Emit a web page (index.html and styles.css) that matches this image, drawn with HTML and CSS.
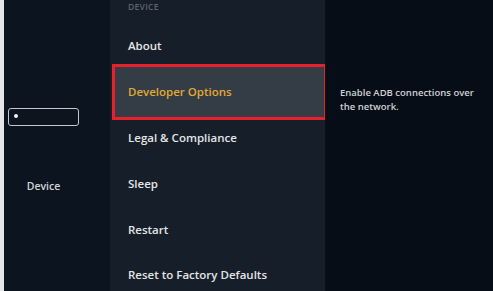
FILE: index.html
```html
<!DOCTYPE html>
<html>
<head>
<meta charset="utf-8">
<link rel="stylesheet" href="styles.css">
</head>
<body>
<div class="screen">
  <div class="side">
    <div class="side-col">
      <div class="dev-icon"><span class="dot"></span></div>
      <div class="side-label">Device</div>
    </div>
  </div>
  <div class="menu">
    <div class="menu-head">DEVICE</div>
    <div class="item">About</div>
    <div class="item selected">Developer Options</div>
    <div class="item">Legal &amp; Compliance</div>
    <div class="item">Sleep</div>
    <div class="item">Restart</div>
    <div class="item">Reset to Factory Defaults</div>
  </div>
  <div class="detail">
    <p class="desc">Enable ADB connections over the network.</p>
  </div>
</div>
</body>
</html>
```
FILE: styles.css
```css
html, body {
  margin: 0;
  padding: 0;
  background: #070d17;
}
body {
  width: 493px;
  height: 291px;
  overflow: hidden;
  font-family: "Open Sans", "Liberation Sans", sans-serif;
}
.screen {
  display: flex;
  height: 291px;
  border-left: 4px solid #e4e6e8;
  box-sizing: border-box;
}
.side {
  width: 106px;
  flex: none;
  background: #0c141f;
}
.side-col {
  width: 71px;
  margin-left: 4px;
  padding-top: 108px;
  display: flex;
  flex-direction: column;
  align-items: center;
}
.dev-icon {
  width: 71px;
  height: 18px;
  box-sizing: border-box;
  border: 1.5px solid #c4c8cc;
  border-radius: 3px;
  position: relative;
}
.dot {
  position: absolute;
  left: 5px;
  top: 5px;
  width: 4px;
  height: 4px;
  border-radius: 50%;
  background: #f2f2f2;
}
.side-label {
  margin-top: 53px;
  line-height: 14px;
  font-size: 10.5px;
  font-weight: 600;
  color: #d2d4d7;
}
.menu {
  width: 215px;
  flex: none;
  background: #161e29;
  display: flex;
  flex-direction: column;
  overflow: hidden;
}
.menu-head {
  height: 23px;
  flex: none;
  line-height: 14px;
  padding-left: 18px;
  font-size: 8.5px;
  font-weight: 600;
  color: #5c6470;
  letter-spacing: 0.3px;
  box-sizing: border-box;
}
.item {
  height: 45.8px;
  flex: none;
  display: flex;
  align-items: center;
  padding-left: 18px;
  font-size: 11.5px;
  font-weight: 600;
  color: #e4e5e7;
  box-sizing: border-box;
}
.item.selected {
  height: 55.8px;
  margin: -5px -2px -5px 2px;
  padding-left: 13px;
  border: 3px solid #e8202a;
  background: #343c46;
  color: #e2a934;
  position: relative;
}
.detail {
  flex: 1;
  padding: 86px 8px 0 15px;
}
.desc {
  margin: 0;
  font-size: 9.5px;
  line-height: 14px;
  font-weight: 600;
  color: #cfd2d6;
  width: 146px;
}
```
